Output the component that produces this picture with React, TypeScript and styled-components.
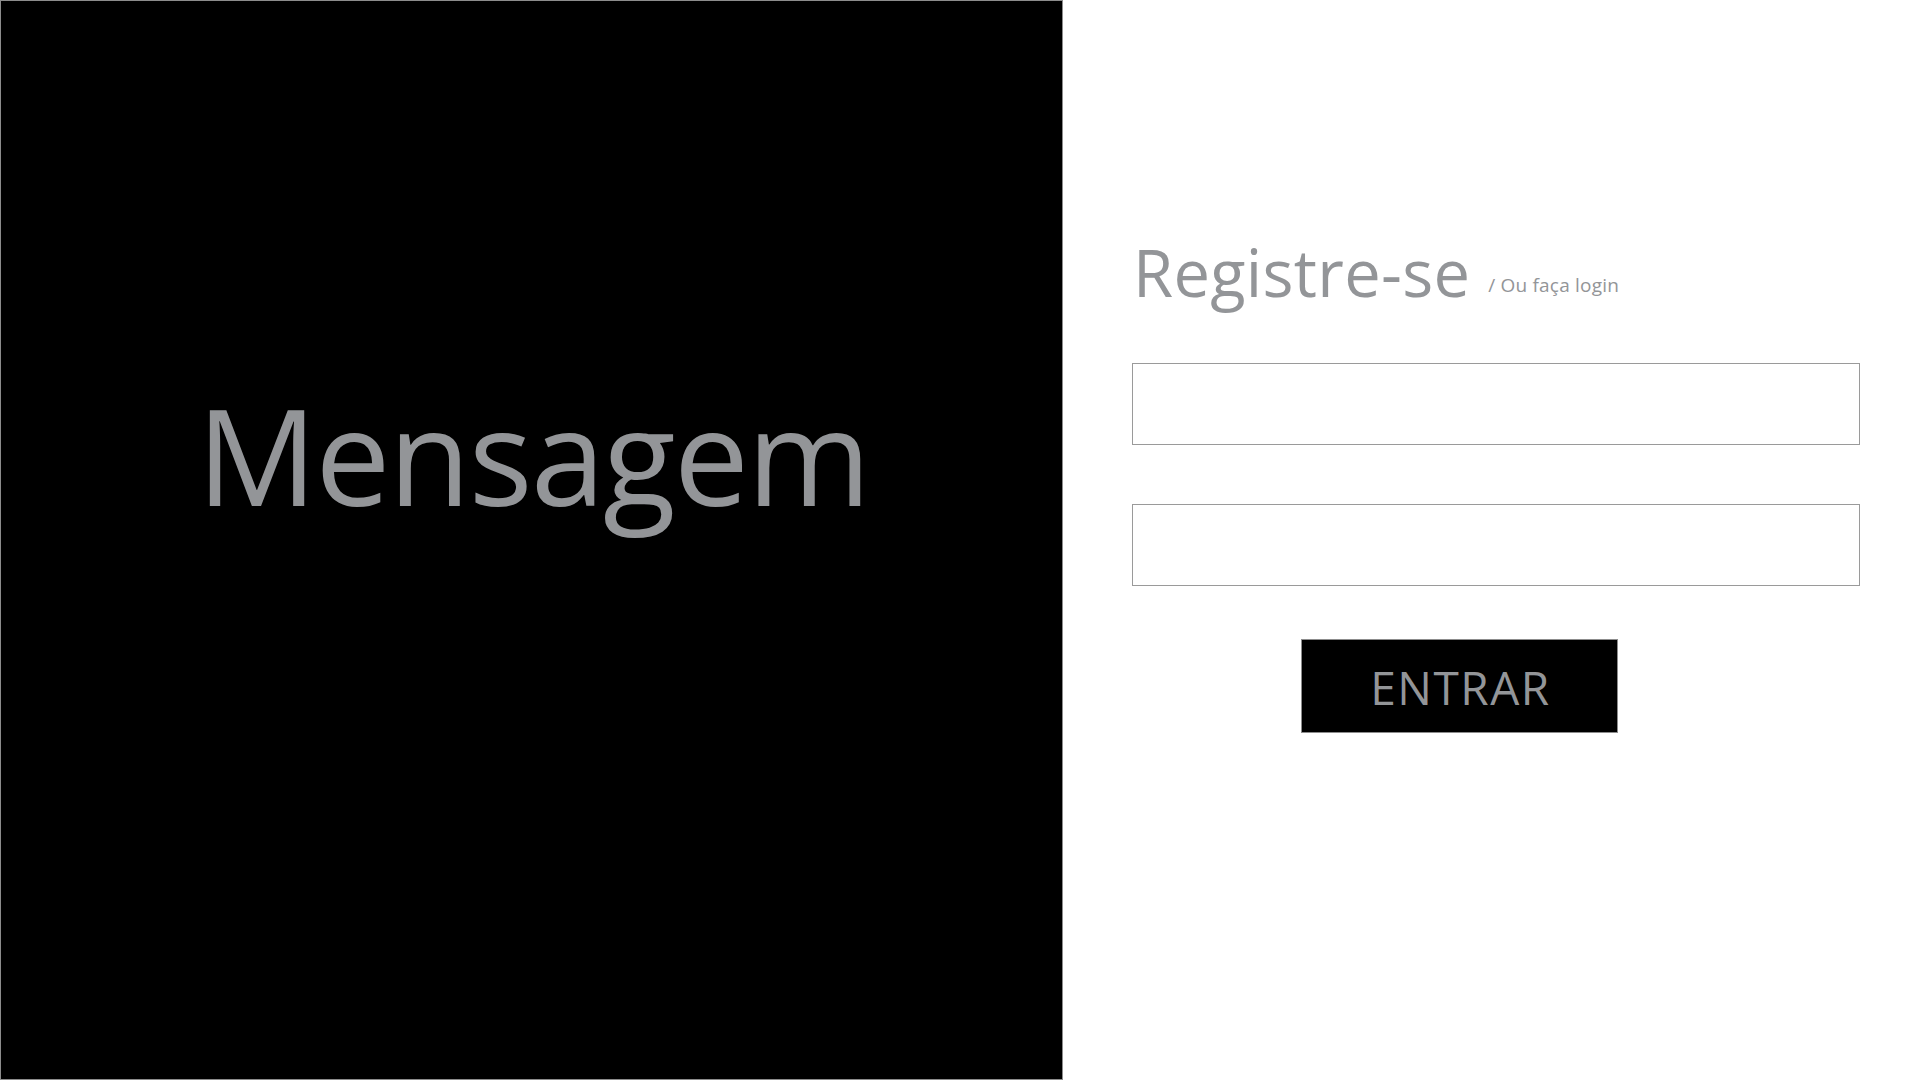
import React from "react";
import styled, { createGlobalStyle } from "styled-components";

const GlobalStyle = createGlobalStyle`
  * { box-sizing: border-box; }
  html, body { margin: 0; padding: 0; background: #ffffff; }
  body { font-family: "Open Sans", "Noto Sans", Arial, sans-serif; }
`;

const TEXT_GRAY = "#939598";
const LINE_GRAY = "#9a9a9a";

const Page = styled.div`
  display: flex;
  width: 1920px;
  height: 1080px;
  overflow: hidden;
`;

const MessagePanel = styled.section`
  width: 1063px;
  height: 1080px;
  flex: none;
  background: #000000;
  border: 1px solid #8c8c8c;
  display: flex;
  justify-content: center;
  padding-top: 386px;
`;

const MessageText = styled.h2`
  margin: 0;
  font-family: "Open Sans", "Noto Sans", Arial, sans-serif;
  font-weight: 400;
  font-size: 134px;
  line-height: 1;
  letter-spacing: -2px;
  color: ${TEXT_GRAY};
  padding-left: 3px;
`;

const FormPanel = styled.section`
  flex: 1;
  padding: 240px 0 0 69px;
  display: flex;
  flex-direction: column;
`;

const Title = styled.h1`
  margin: 0 0 58px 0;
  height: 65px;
  font-weight: 400;
  font-size: 65px;
  line-height: 1;
  letter-spacing: 0.3px;
  color: ${TEXT_GRAY};
  white-space: nowrap;
  padding-left: 1px;
`;

const SubTitle = styled.span`
  font-size: 19px;
  letter-spacing: 0.2px;
  margin-left: 18px;
  vertical-align: 5px;
`;

const Field = styled.input<{ $gap: number }>`
  display: block;
  width: 728px;
  height: 82px;
  margin: 0 0 ${(p) => p.$gap}px 0;
  border: 1px solid ${LINE_GRAY};
  background: #ffffff;
  outline: none;
  padding: 0 20px;
  font-family: "Open Sans", sans-serif;
  font-size: 24px;
  color: #555;
`;

const SubmitButton = styled.button`
  width: 317px;
  height: 94px;
  margin-left: 169px;
  background: #000000;
  border: 1px solid #8c8c8c;
  color: ${TEXT_GRAY};
  font-family: "Open Sans", "Noto Sans", Arial, sans-serif;
  font-size: 46px;
  font-weight: 400;
  line-height: 1;
  letter-spacing: 1.5px;
  display: flex;
  align-items: center;
  justify-content: center;
  padding: 2px 0 0 2px;
  cursor: pointer;
`;

export default function App() {
  return (
    <>
      <GlobalStyle />
      <Page>
        <MessagePanel>
          <MessageText>Mensagem</MessageText>
        </MessagePanel>
        <FormPanel>
          <Title>
            Registre-se<SubTitle>/ Ou faça login</SubTitle>
          </Title>
          <Field $gap={59} type="text" aria-label="usuário" />
          <Field $gap={53} type="password" aria-label="senha" />
          <SubmitButton type="button">ENTRAR</SubmitButton>
        </FormPanel>
      </Page>
    </>
  );
}
